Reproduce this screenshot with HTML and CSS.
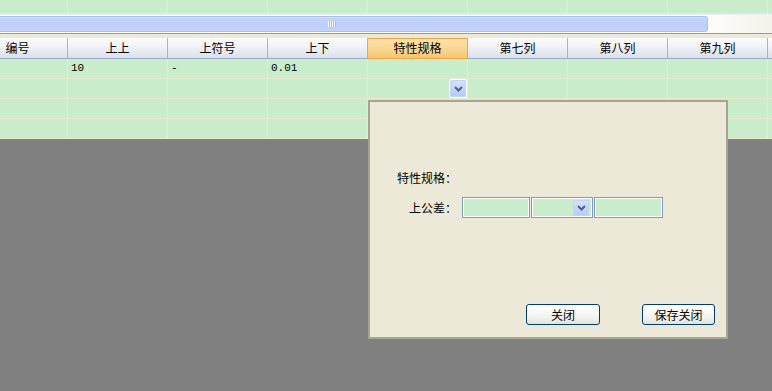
FILE: index.html
```html
<!DOCTYPE html>
<html>
<head>
<meta charset="utf-8">
<link rel="stylesheet" href="styles.css">
</head>
<body>
<div class="page">
  <div class="grid-wrap">
    <div class="row top-row">
      <div class="cell"></div><div class="cell"></div><div class="cell"></div><div class="cell"></div><div class="cell"></div><div class="cell"></div><div class="cell"></div><div class="cell"></div><div class="cell"></div>
    </div>
  </div>
  <div class="hscroll">
    <div class="thumb"><span class="grip"><i></i><i></i><i></i><i></i></span></div>
  </div>
  <div class="band"></div>
  <div class="grid-wrap">
    <div class="row header">
      <div class="hcell">编号</div>
      <div class="hcell">上上</div>
      <div class="hcell">上符号</div>
      <div class="hcell">上下</div>
      <div class="hcell active">特性规格</div>
      <div class="hcell">第七列</div>
      <div class="hcell">第八列</div>
      <div class="hcell">第九列</div>
      <div class="hcell"></div>
    </div>
    <div class="row body-row">
      <div class="cell"></div><div class="cell">10</div><div class="cell">-</div><div class="cell">0.01</div><div class="cell"></div><div class="cell"></div><div class="cell"></div><div class="cell"></div><div class="cell"></div>
    </div>
    <div class="row body-row">
      <div class="cell"></div><div class="cell"></div><div class="cell"></div><div class="cell"></div>
      <div class="cell dd-cell"><span class="dd-btn"><svg width="9" height="6" viewBox="0 0 9 6"><polyline points="1,1 4.5,4.5 8,1" fill="none" stroke="#4d6185" stroke-width="2"/></svg></span></div>
      <div class="cell"></div><div class="cell"></div><div class="cell"></div><div class="cell"></div>
    </div>
    <div class="row body-row">
      <div class="cell"></div><div class="cell"></div><div class="cell"></div><div class="cell"></div><div class="cell"></div><div class="cell"></div><div class="cell"></div><div class="cell"></div><div class="cell"></div>
    </div>
    <div class="row body-row">
      <div class="cell"></div><div class="cell"></div><div class="cell"></div><div class="cell"></div><div class="cell"></div><div class="cell"></div><div class="cell"></div><div class="cell"></div><div class="cell"></div>
    </div>
  </div>

  <div class="dialog">
    <div class="form">
      <div class="label">特性规格：</div>
      <div></div>
      <div class="label">上公差：</div>
      <div class="fields">
        <span class="input w1"></span>
        <span class="input select"><span class="dd-btn small"><svg width="9" height="6" viewBox="0 0 9 6"><polyline points="1,1 4.5,4.5 8,1" fill="none" stroke="#4d6185" stroke-width="2"/></svg></span></span>
        <span class="input w3"></span>
      </div>
    </div>
    <div class="footer">
      <button class="btn b1">关闭</button>
      <button class="btn b2">保存关闭</button>
    </div>
  </div>
</div>
</body>
</html>
```

FILE: styles.css
```css
* { box-sizing: border-box; }
html, body {
  margin: 0;
  padding: 0;
  background: #808080;
  overflow: hidden;
  width: 772px;
  height: 391px;
}
body {
  font-family: "Noto Sans CJK SC", "DejaVu Sans", sans-serif;
  font-size: 12px;
  color: #000;
}
.page {
  position: relative;
  width: 772px;
  height: 391px;
}
.grid-wrap {
  width: 772px;
  overflow: hidden;
  background: #c9edcb;
}
.row {
  display: flex;
  margin-left: -32px;
  width: 900px;
}
.cell {
  flex: 0 0 100px;
  border-right: 1px solid #ece8cf;
  border-bottom: 1px solid #ece8cf;
  background: #c9edcb;
  padding-left: 3px;
  line-height: 19px;
  font-family: "Liberation Mono", "Noto Sans CJK SC", monospace;
  font-size: 11px;
}
.top-row .cell { height: 14px; }
.hscroll {
  height: 20px;
  background: linear-gradient(to right, #ffffff 90%, #f4f2ea);
  border-top: 1px solid #e6eef8;
  border-bottom: 1px solid #8a9bb3;
  padding: 1px 0 1px 0;
}
.thumb {
  width: 708px;
  height: 16px;
  background: linear-gradient(#c6d6fb, #bccff9 60%, #c4d4fb);
  border: 1px solid #a9bff0;
  border-left: none;
  border-radius: 0 3px 3px 0;
  box-shadow: inset 0 1px 0 #d4e0fd;
  display: flex;
  align-items: center;
  padding-left: 328px;
}
.grip { display: flex; gap: 1px; }
.grip i {
  display: block;
  width: 1px;
  height: 6px;
  background: #ffffff;
  box-shadow: 1px 0 0 #9fb6ee;
}
.band {
  height: 4px;
  background: #ece9d8;
}
.header { height: 21px; }
.hcell {
  flex: 0 0 100px;
  height: 21px;
  border-right: 1px solid #a3b4cb;
  border-bottom: 1px solid #98adc8;
  background: linear-gradient(#fcfcfe, #f2f3f7 40%, #dcdfea);
  text-align: center;
  line-height: 20px;
  font-size: 12px;
}
.hcell.active {
  background: linear-gradient(#fbe2ab, #f9d48c 60%, #f6c46f);
  border: 1px solid #f5a443;
  margin-left: -1px;
  flex-basis: 101px;
  line-height: 18px;
}
.body-row .cell { height: 20px; }
.dd-cell {
  display: flex;
  justify-content: flex-end;
  align-items: flex-start;
  padding: 0;
}
.dd-btn {
  display: flex;
  align-items: center;
  justify-content: center;
  width: 18px;
  height: 19px;
  background: linear-gradient(#d6e2fd, #b5c8f8);
  border: 1px solid #ffffff;
  border-radius: 2px;
  box-shadow: inset 0 0 0 1px #c4d3f7;
}
.dialog {
  position: absolute;
  left: 368px;
  top: 100px;
  width: 360px;
  height: 239px;
  background: #ece9d8;
  border: 2px solid #a6a593;
  padding: 69px 11px 0 25px;
  display: flex;
  flex-direction: column;
}
.form {
  display: grid;
  grid-template-columns: 62px auto;
  column-gap: 5px;
  row-gap: 12px;
  align-items: center;
}
.label {
  text-align: right;
  font-size: 12px;
  line-height: 14px;
}
.fields { display: flex; gap: 1px; }
.input {
  display: block;
  height: 21px;
  background: #c9edcb;
  border: 1px solid #7f9db9;
  box-shadow: inset 0 0 0 1px #ffffff;
}
.w1 { width: 68px; }
.w3 { width: 69px; }
.select {
  width: 62px;
  display: flex;
  justify-content: flex-end;
  align-items: center;
  padding-right: 3px;
}
.dd-btn.small {
  width: 16px;
  height: 16px;
  border: none;
  box-shadow: inset 0 0 0 1px #c4d3f7;
}
.footer {
  margin-top: auto;
  margin-bottom: 12px;
  display: flex;
  justify-content: flex-end;
  gap: 42px;
}
.btn {
  height: 21px;
  border: 1px solid #003c74;
  border-radius: 3px;
  background: linear-gradient(#ffffff, #f4f4f0 60%, #e3e2da);
  font-family: "Noto Sans CJK SC", sans-serif;
  font-size: 12px;
  line-height: 17px;
  padding: 0;
  color: #000;
}
.b1 { width: 74px; }
.b2 { width: 73px; }
```
